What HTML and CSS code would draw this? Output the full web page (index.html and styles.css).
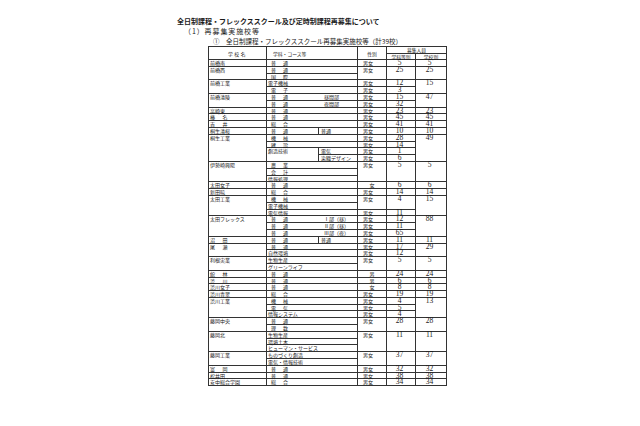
FILE: index.html
```html
<!DOCTYPE html>
<html lang="ja">
<head>
<meta charset="utf-8">
<title>再募集実施校等</title>
<link rel="stylesheet" href="styles.css">
</head>
<body>
<div class="page">
  <h1 class="title">全日制課程・フレックススクール及び定時制課程再募集について</h1>
  <p class="sec">（1）再募集実施校等</p>
  <p class="sub">①　全日制課程・フレックススクール再募集実施校等（計39校）</p>
  <table class="tbl">
    <colgroup>
      <col class="c-name"><col class="c-d1"><col class="c-d2"><col class="c-sex"><col class="c-n1"><col class="c-n2">
    </colgroup>
    <thead>
      <tr class="hr"><th rowspan="2" class="hn">学校名</th><th rowspan="2" colspan="2" class="hd">学科・コース等</th><th rowspan="2">性別</th><th colspan="2">募集人員</th></tr>
      <tr class="hr"><th>学科等別</th><th>学校別</th></tr>
    </thead>
    <tbody>
      <tr><td class="n">前橋南</td><td class="d" colspan="2"><span class="w">普　通</span></td><td class="s">男女</td><td class="v">5</td><td class="v">5</td></tr>

      <tr><td class="n" rowspan="2">前橋西</td><td class="d" colspan="2"><span class="w">普　通</span></td><td class="s" rowspan="2">男女</td><td class="v" rowspan="2">25</td><td class="v" rowspan="2">25</td></tr>
      <tr><td class="d" colspan="2"><span class="w">国　際</span></td></tr>

      <tr><td class="n" rowspan="2">前橋工業</td><td class="d" colspan="2">電子機械</td><td class="s">男女</td><td class="v">12</td><td class="v" rowspan="2">15</td></tr>
      <tr><td class="d" colspan="2"><span class="w">電　子</span></td><td class="s">男女</td><td class="v">3</td></tr>

      <tr><td class="n" rowspan="2">前橋清陵</td><td class="d" colspan="2"><span class="w k">普　通</span><span>昼間部</span></td><td class="s">男女</td><td class="v">15</td><td class="v" rowspan="2">47</td></tr>
      <tr><td class="d" colspan="2"><span class="w k">普　通</span><span>夜間部</span></td><td class="s">男女</td><td class="v">32</td></tr>

      <tr><td class="n">高崎東</td><td class="d" colspan="2"><span class="w">普　通</span></td><td class="s">男女</td><td class="v">23</td><td class="v">23</td></tr>
      <tr><td class="n"><span class="ws">榛　名</span></td><td class="d" colspan="2"><span class="w">普　通</span></td><td class="s">男女</td><td class="v">45</td><td class="v">45</td></tr>
      <tr><td class="n"><span class="ws">吉　井</span></td><td class="d" colspan="2"><span class="w">総　合</span></td><td class="s">男女</td><td class="v">41</td><td class="v">41</td></tr>
      <tr><td class="n">桐生清桜</td><td class="d1"><span class="w">普　通</span></td><td class="d2">普通</td><td class="s">男女</td><td class="v">10</td><td class="v">10</td></tr>

      <tr><td class="n" rowspan="4">桐生工業</td><td class="d" colspan="2"><span class="w">機　械</span></td><td class="s">男女</td><td class="v">28</td><td class="v" rowspan="4">49</td></tr>
      <tr><td class="d" colspan="2"><span class="w">建　設</span></td><td class="s">男女</td><td class="v">14</td></tr>
      <tr><td class="d1" rowspan="2">創造技術</td><td class="d2">電気</td><td class="s">男女</td><td class="v">1</td></tr>
      <tr><td class="d2">染織デザイン</td><td class="s">男女</td><td class="v">6</td></tr>

      <tr><td class="n" rowspan="3">伊勢崎興陽</td><td class="d" colspan="2"><span class="w">農　業</span></td><td class="s" rowspan="3">男女</td><td class="v" rowspan="3">5</td><td class="v" rowspan="3">5</td></tr>
      <tr><td class="d" colspan="2"><span class="w">会　計</span></td></tr>
      <tr><td class="d" colspan="2">情報処理</td></tr>

      <tr><td class="n">太田女子</td><td class="d" colspan="2"><span class="w">普　通</span></td><td class="s c">女</td><td class="v">6</td><td class="v">6</td></tr>
      <tr><td class="n">新田暁</td><td class="d" colspan="2"><span class="w">総　合</span></td><td class="s">男女</td><td class="v">14</td><td class="v">14</td></tr>

      <tr><td class="n" rowspan="3">太田工業</td><td class="d" colspan="2"><span class="w">機　械</span></td><td class="s" rowspan="2">男女</td><td class="v" rowspan="2">4</td><td class="v" rowspan="3">15</td></tr>
      <tr><td class="d" colspan="2">電子機械</td></tr>
      <tr><td class="d" colspan="2">電気情報</td><td class="s">男女</td><td class="v">11</td></tr>

      <tr><td class="n" rowspan="3">太田フレックス</td><td class="d" colspan="2"><span class="w k">普　通</span><span>Ⅰ部（昼）</span></td><td class="s">男女</td><td class="v">12</td><td class="v" rowspan="3">88</td></tr>
      <tr><td class="d" colspan="2"><span class="w k">普　通</span><span>Ⅱ部（昼）</span></td><td class="s">男女</td><td class="v">11</td></tr>
      <tr><td class="d" colspan="2"><span class="w k">普　通</span><span>Ⅲ部（夜）</span></td><td class="s">男女</td><td class="v">65</td></tr>

      <tr><td class="n"><span class="ws">沼　田</span></td><td class="d1"><span class="w">普　通</span></td><td class="d2">普通</td><td class="s">男女</td><td class="v">11</td><td class="v">11</td></tr>

      <tr><td class="n" rowspan="2"><span class="ws">尾　瀬</span></td><td class="d" colspan="2"><span class="w">普　通</span></td><td class="s">男女</td><td class="v">17</td><td class="v" rowspan="2">29</td></tr>
      <tr><td class="d" colspan="2">自然環境</td><td class="s">男女</td><td class="v">12</td></tr>

      <tr><td class="n" rowspan="2">利根実業</td><td class="d" colspan="2">生物生産</td><td class="s" rowspan="2">男女</td><td class="v" rowspan="2">5</td><td class="v" rowspan="2">5</td></tr>
      <tr><td class="d" colspan="2">グリーンライフ</td></tr>

      <tr><td class="n"><span class="ws">館　林</span></td><td class="d" colspan="2"><span class="w">普　通</span></td><td class="s c">男</td><td class="v">24</td><td class="v">24</td></tr>
      <tr><td class="n"><span class="ws">渋　川</span></td><td class="d" colspan="2"><span class="w">普　通</span></td><td class="s c">男</td><td class="v">6</td><td class="v">6</td></tr>
      <tr><td class="n">渋川女子</td><td class="d" colspan="2"><span class="w">普　通</span></td><td class="s c">女</td><td class="v">8</td><td class="v">8</td></tr>
      <tr><td class="n">渋川青翠</td><td class="d" colspan="2"><span class="w">総　合</span></td><td class="s">男女</td><td class="v">19</td><td class="v">19</td></tr>

      <tr><td class="n" rowspan="3">渋川工業</td><td class="d" colspan="2"><span class="w">機　械</span></td><td class="s">男女</td><td class="v">4</td><td class="v" rowspan="3">13</td></tr>
      <tr><td class="d" colspan="2"><span class="w">電　気</span></td><td class="s">男女</td><td class="v">5</td></tr>
      <tr><td class="d" colspan="2">情報システム</td><td class="s">男女</td><td class="v">4</td></tr>

      <tr><td class="n" rowspan="2">藤岡中央</td><td class="d" colspan="2"><span class="w">普　通</span></td><td class="s" rowspan="2">男女</td><td class="v" rowspan="2">28</td><td class="v" rowspan="2">28</td></tr>
      <tr><td class="d" colspan="2"><span class="w">理　数</span></td></tr>

      <tr><td class="n" rowspan="3">藤岡北</td><td class="d" colspan="2">生物生産</td><td class="s" rowspan="3">男女</td><td class="v" rowspan="3">11</td><td class="v" rowspan="3">11</td></tr>
      <tr><td class="d" colspan="2">環境土木</td></tr>
      <tr><td class="d" colspan="2">ヒューマン・サービス</td></tr>

      <tr><td class="n" rowspan="2">藤岡工業</td><td class="d" colspan="2">ものづくり創造</td><td class="s" rowspan="2">男女</td><td class="v" rowspan="2">37</td><td class="v" rowspan="2">37</td></tr>
      <tr><td class="d" colspan="2">電気・情報技術</td></tr>

      <tr><td class="n"><span class="ws">富　岡</span></td><td class="d" colspan="2"><span class="w">普　通</span></td><td class="s">男女</td><td class="v">32</td><td class="v">32</td></tr>
      <tr><td class="n">松井田</td><td class="d" colspan="2"><span class="w">普　通</span></td><td class="s">男女</td><td class="v">38</td><td class="v">38</td></tr>
      <tr><td class="n">安中総合学園</td><td class="d" colspan="2"><span class="w">総　合</span></td><td class="s">男女</td><td class="v">34</td><td class="v">34</td></tr>
    </tbody>
  </table>
</div>
</body>
</html>
```

FILE: styles.css
```css
html, body {
  margin: 0;
  padding: 0;
  background: #ffffff;
}

body {
  font-family: "Noto Sans CJK JP", "Noto Sans", sans-serif;
  color: #1a1a1a;
}

.page {
  width: 640px;
  height: 426px;
  overflow: hidden;
}

.title {
  margin: 17px 0 0 177px;
  font-size: 7px;
  line-height: 8px;
  font-weight: bold;
}

.sec {
  margin: 2px 0 0 184px;
  font-size: 7px;
  line-height: 8px;
  letter-spacing: 0.9px;
}

.sub {
  margin: 2px 0 0 213px;
  font-size: 6.5px;
  line-height: 8px;
}

.tbl {
  margin: 1px 0 0 208px;
  border-collapse: collapse;
  table-layout: fixed;
  width: 238px;
  font-size: 5px;
}

.c-name { width: 58px; }
.c-d1 { width: 52px; }
.c-d2 { width: 39px; }
.c-sex { width: 29px; }
.c-n1 { width: 29px; }
.c-n2 { width: 31px; }

.tbl th,
.tbl td {
  border: 1px solid #333333;
  padding: 0;
  white-space: nowrap;
}

.tbl th {
  font-size: 4.8px;
  font-weight: normal;
  line-height: 5px;
  text-align: center;
  vertical-align: middle;
}

.tbl .hr {
  height: 6.5px;
}

.tbl .hn {
  letter-spacing: 1.6px;
}

.tbl .hd {
  text-align: left;
  padding-left: 6px;
}

.tbl tbody tr {
  height: 6.8px;
}

.tbl td {
  line-height: 5.6px;
  vertical-align: top;
  text-align: left;
}

.tbl .n {
  padding-left: 1px;
}

.tbl .d,
.tbl .d1 {
  padding-left: 1px;
}

.tbl .d2 {
  padding-left: 2px;
}

.w {
  display: inline-block;
  margin-left: 3px;
  letter-spacing: 1px;
}

.k {
  width: 53px;
}

.ws {
  letter-spacing: 1.2px;
}

.tbl .s {
  padding-left: 5px;
}

.tbl .s.c {
  padding-left: 0;
  text-align: center;
}

.tbl .v {
  font-family: "Liberation Serif", "DejaVu Serif", serif;
  font-size: 7.5px;
  line-height: 5.6px;
  text-align: center;
  padding-right: 3px;
}
```
